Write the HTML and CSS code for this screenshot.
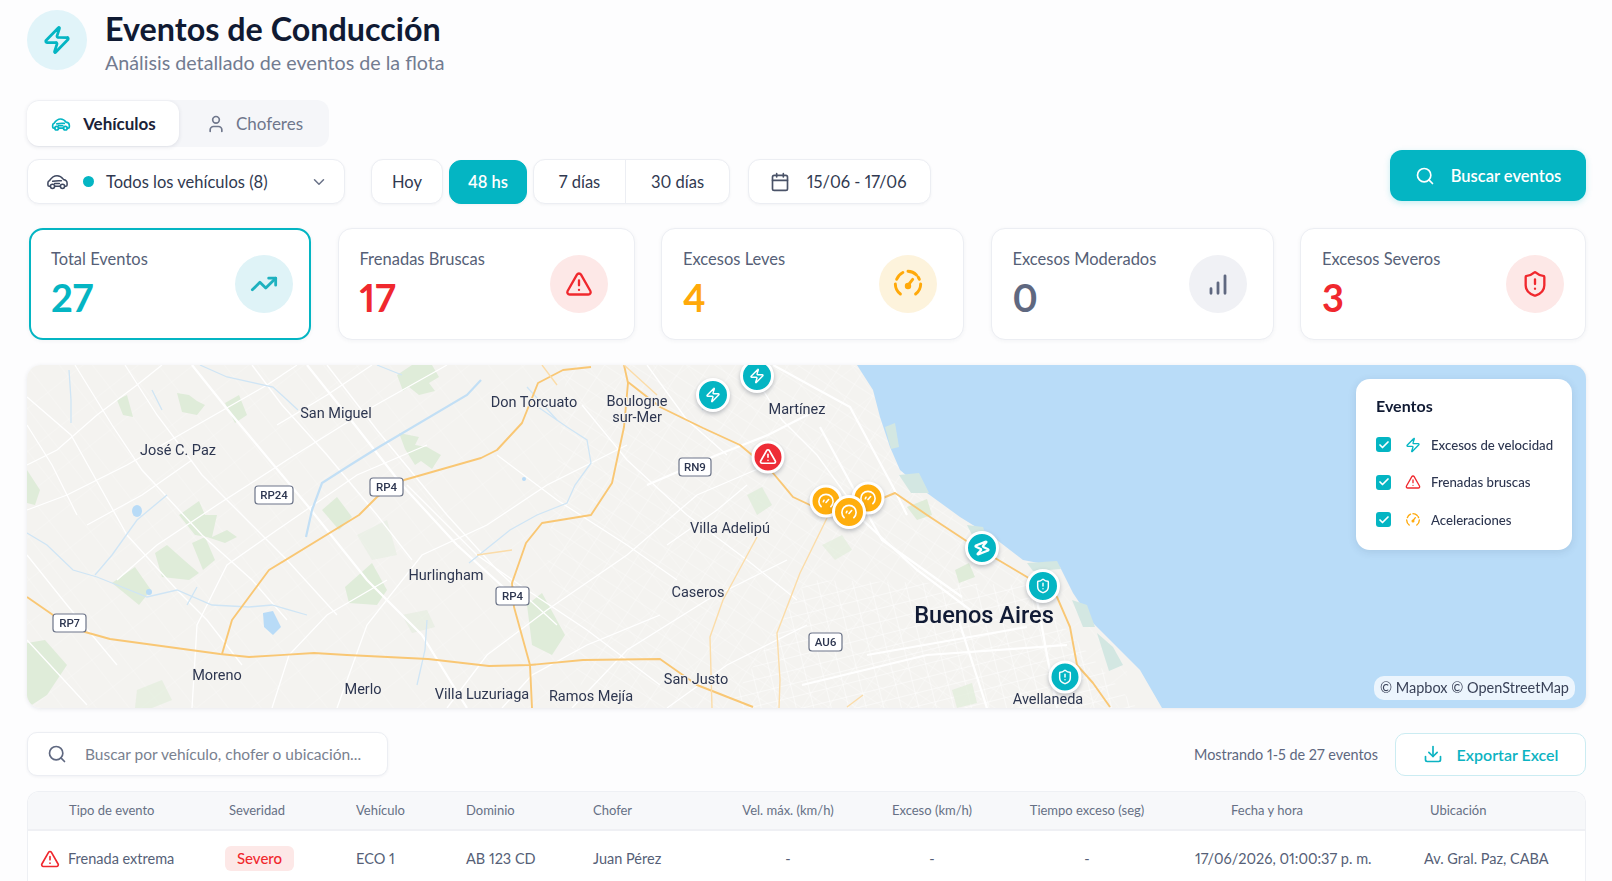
FILE: index.html
```html
<!DOCTYPE html>
<html lang="es">
<head>
<meta charset="utf-8">
<title>Eventos de Conducción</title>
<link rel="stylesheet" href="styles.css">
</head>
<body>
<svg class="sprite" xmlns="http://www.w3.org/2000/svg">
  <symbol id="i-zap" viewBox="0 0 24 24"><path d="M4 14a1 1 0 0 1-.78-1.63l9.9-10.2a.5.5 0 0 1 .86.46l-1.92 6.02A1 1 0 0 0 13 10h7a1 1 0 0 1 .78 1.63l-9.9 10.2a.5.5 0 0 1-.86-.46l1.92-6.02A1 1 0 0 0 11 14z"/></symbol>
  <symbol id="i-car" viewBox="0 0 24 24"><path d="M4.6 17H3.4C2.6 17 2 16.4 2 15.6v-2.2c0-1.1.7-2 1.7-2.4C5.600 8.200 8 6 11.500 6c3 0 5.200 1.800 6.700 3.800 2.200.4 3.800 1.600 3.800 3.800v2c0 .8-.6 1.400-1.400 1.400h-1.100"/><path d="M9 17h6"/><circle cx="6.800" cy="17" r="2.200"/><circle cx="17.200" cy="17" r="2.200"/><path d="M7 11.800c2.500-.6 5.500-.8 9-.6M9 14h5"/></symbol>
  <symbol id="i-user" viewBox="0 0 24 24"><path d="M19 21v-2a4 4 0 0 0-4-4H9a4 4 0 0 0-4 4v2"/><circle cx="12" cy="7" r="4"/></symbol>
  <symbol id="i-chev" viewBox="0 0 24 24"><path d="m6 9 6 6 6-6"/></symbol>
  <symbol id="i-cal" viewBox="0 0 24 24"><path d="M8 2v4M16 2v4"/><rect x="3" y="4" width="18" height="18" rx="2"/><path d="M3 10h18"/></symbol>
  <symbol id="i-search" viewBox="0 0 24 24"><circle cx="11" cy="11" r="8"/><path d="m21 21-4.300-4.300"/></symbol>
  <symbol id="i-trend" viewBox="0 0 24 24"><path d="m22 7-8.500 8.500-5-5L2 17"/><path d="M16 7h6v6"/></symbol>
  <symbol id="i-alert" viewBox="0 0 24 24"><path d="m21.730 18-8-14a2 2 0 0 0-3.480 0l-8 14A2 2 0 0 0 4 21h16a2 2 0 0 0 1.730-3"/><path d="M12 9v4M12 17h.01"/></symbol>
  <symbol id="i-gauge" viewBox="0 0 24 24"><path d="M6.300 19.500a9.500 9.500 0 0 1-3.800-7.500M21.500 12a9.500 9.500 0 0 1-3.800 7.500"/><path d="M3.500 8.500A9.500 9.500 0 0 1 9 3M12 2.500a9.500 9.500 0 0 1 8.500 6" stroke-dasharray="7 2"/><path d="m12 13 3.500-4.500"/><circle cx="12" cy="13.500" r="1.300"/></symbol>
  <symbol id="i-dial" viewBox="0 0 24 24"><path d="M5.500 19.500a9.500 9.500 0 1 1 13 0"/><path d="m12 14 3.500-4"/><path d="M8.500 13a4 4 0 0 1 .8-2"/></symbol>
  <symbol id="i-bars" viewBox="0 0 24 24"><path d="M6 20v-4M12 20v-9M18 20V5"/></symbol>
  <symbol id="i-shield" viewBox="0 0 24 24"><path d="M20 13c0 5-3.500 7.500-7.660 8.950a1 1 0 0 1-.67-.01C7.500 20.500 4 18 4 13V6a1 1 0 0 1 1-1c2 0 4.500-1.200 6.240-2.720a1.170 1.170 0 0 1 1.520 0C14.510 3.810 17 5 19 5a1 1 0 0 1 1 1z"/><path d="M12 8v4M12 16h.01"/></symbol>
  <symbol id="i-down" viewBox="0 0 24 24"><path d="M12 15V3"/><path d="M21 15v4a2 2 0 0 1-2 2H5a2 2 0 0 1-2-2v-4"/><path d="m7 10 5 5 5-5"/></symbol>
  <symbol id="i-check" viewBox="0 0 24 24"><path d="M20 6 9 17l-5-5"/></symbol>
</svg>

<main class="page">
  <header class="head">
    <div class="head-ico"><svg class="ic"><use href="#i-zap"/></svg></div>
    <div class="head-txt">
      <h1 class="title">Eventos de Conducción</h1>
      <p class="sub">Análisis detallado de eventos de la flota</p>
    </div>
  </header>

  <section class="controls">
    <div class="controls-left">
      <div class="tabs">
        <button class="tab tab-on"><svg class="ic ic-20 teal"><use href="#i-car"/></svg>Vehículos</button>
        <button class="tab"><svg class="ic ic-20"><use href="#i-user"/></svg>Choferes</button>
      </div>
      <div class="filters">
        <div class="select">
          <svg class="ic ic-23 slate-dark"><use href="#i-car"/></svg>
          <span class="dot"></span>
          <span class="select-txt">Todos los vehículos (8)</span>
          <svg class="ic ic-18 chev"><use href="#i-chev"/></svg>
        </div>
        <button class="pill pill-hoy">Hoy</button>
        <button class="pill pill-on">48 hs</button>
        <div class="group">
          <button class="seg seg-7">7 días</button>
          <button class="seg seg-30">30 días</button>
        </div>
        <div class="date"><svg class="ic ic-20"><use href="#i-cal"/></svg>15/06 - 17/06</div>
      </div>
    </div>
    <button class="cta"><svg class="ic ic-20"><use href="#i-search"/></svg>Buscar eventos</button>
  </section>

  <section class="cards">
    <article class="card card-on">
      <div><div class="card-l">Total Eventos</div><div class="card-n teal">27</div></div>
      <div class="round round-teal"><svg class="ic ic-28 ic-thick"><use href="#i-trend"/></svg></div>
    </article>
    <article class="card">
      <div><div class="card-l">Frenadas Bruscas</div><div class="card-n red">17</div></div>
      <div class="round round-red"><svg class="ic ic-28"><use href="#i-alert"/></svg></div>
    </article>
    <article class="card">
      <div><div class="card-l">Excesos Leves</div><div class="card-n orange">4</div></div>
      <div class="round round-orange"><svg class="ic ic-32"><use href="#i-gauge"/></svg></div>
    </article>
    <article class="card">
      <div><div class="card-l">Excesos Moderados</div><div class="card-n slate">0</div></div>
      <div class="round round-gray"><svg class="ic ic-28 ic-thick"><use href="#i-bars"/></svg></div>
    </article>
    <article class="card card-last">
      <div><div class="card-l">Excesos Severos</div><div class="card-n red">3</div></div>
      <div class="round round-red"><svg class="ic ic-28"><use href="#i-shield"/></svg></div>
    </article>
  </section>

  <section class="map">
    <svg class="map-svg" viewBox="0 0 1559 343" width="1559" height="343" xmlns="http://www.w3.org/2000/svg">
      <defs>
        <pattern id="urban" width="17" height="13" patternUnits="userSpaceOnUse" patternTransform="rotate(-14)">
          <path d="M0 0H17M0 0V13" stroke="#ffffff" stroke-width="1" fill="none"/>
        </pattern>
        <pattern id="urban2" width="22" height="15" patternUnits="userSpaceOnUse" patternTransform="rotate(33)">
          <path d="M0 0H22M0 0V15" stroke="#ffffff" stroke-width=".8" fill="none"/>
        </pattern>
        <pattern id="fine" width="34" height="26" patternUnits="userSpaceOnUse" patternTransform="rotate(52)">
          <path d="M0 0H34M0 0V26" stroke="#ffffff" stroke-width=".6" fill="none" opacity=".6"/>
        </pattern>
      </defs>
      <rect class="land" width="1559" height="343"/>
      <rect class="t-fine" width="1100" height="343"/>
      <path class="t-urban2" d="M540 0H830L900 130L1000 210L1090 343H560L520 200Z"/>
      <path class="t-urban" d="M780 215L1000 220L1110 343H700Z"/>

      <g class="green">
        <path d="M370 10L385 0H405L412 12L402 18L408 26L392 30L382 22L376 26Z"/>
        <path d="M372 68L392 72L388 80L400 82L414 90L405 104L394 96L388 100L378 84Z"/>
        <path d="M150 28L162 30L170 36L178 40L170 50L155 47Z"/>
        <path d="M198 38L212 30L220 50L208 58Z"/>
        <path d="M90 35L100 30L106 52L96 50Z"/>
        <path d="M152 150L172 136L178 150L190 150L185 172L200 165L210 172L198 178L180 172L168 170Z"/>
        <path d="M128 188L140 180L158 196L172 208L162 215L135 212Z"/>
        <path d="M165 178L178 172L188 195L176 205Z"/>
        <path d="M85 218L108 202L124 225L112 240Z"/>
        <path d="M318 222L345 198L360 225L350 240L322 238Z"/>
        <path d="M330 170L360 155L370 190L345 195Z" opacity=".4"/>
        <path d="M500 240L515 228L538 270L525 290L505 280Z"/>
        <path d="M0 105L13 125L8 140L0 138Z"/>
        <path d="M0 278L18 275L40 300L20 330L0 343Z"/>
        <path d="M295 145L310 132L325 152L312 165Z"/>
        <path d="M110 325L135 315L145 335L125 343H108Z" opacity=".6"/>
        <path d="M375 250L400 245L408 262L385 268Z" opacity=".5"/>
        <path d="M720 130L735 122L745 140L730 150Z" opacity=".8"/>
        <path d="M795 180L815 170L825 185L808 195Z" opacity=".6"/>
        <path d="M928 205L942 198L948 212L932 218Z"/>
        <path d="M880 142L900 134L905 150L890 155Z"/>
        <path d="M925 325L945 318L950 338L930 343Z" opacity=".7"/>
      </g>

      <g class="minor">
        <path d="M0 32L44 70L72 120L100 170L150 225L180 255L215 300"/>
        <path d="M48 0L85 60L115 105L175 170L225 215L260 255"/>
        <path d="M98 0L130 50L175 110L230 165L260 195L310 250"/>
        <path d="M0 100L30 85L70 50L110 20L135 0"/>
        <path d="M0 145L40 130L100 100L170 60L240 20L270 0"/>
        <path d="M90 215L130 180L190 140L260 95L340 45L420 0"/>
        <path d="M165 343L170 260L200 200L250 165L330 110L400 80"/>
        <path d="M0 275L60 340M0 190L40 240L90 300"/>
        <path d="M310 343L340 260L395 190L460 160L520 120L600 80"/>
        <path d="M420 343L460 290L520 245L600 190L670 130L740 100"/>
        <path d="M545 343L600 285L680 235L760 195"/>
        <path d="M380 120L450 190L500 225L560 265L633 320"/>
        <path d="M300 0L350 65L420 150L470 205L530 260"/>
        <path d="M555 40L600 95L660 150L720 195L770 235"/>
        <path d="M470 90L530 135L600 180L650 215"/>
        <path d="M620 0L660 55L700 90"/>
        <path d="M720 0L755 55L790 90L830 145"/>
        <path d="M225 0L255 40L300 90L350 150L385 195"/>
        <path d="M250 60L300 30L345 0"/>
        <path d="M60 160L115 130L165 95"/>
        <path d="M0 60L25 100L50 150"/>
        <path d="M245 343L262 290L300 250L360 215"/>
        <path d="M475 343L505 310L560 280L633 250"/>
        <path d="M640 180L690 145L720 120"/>
        <path d="M640 343L700 300L780 260"/>
      </g>
      <g class="major">
        <path d="M165 0L205 50L280 140L340 215L395 270L440 343"/>
        <path d="M280 0L320 50L375 120L430 180L485 230"/>
        <path d="M746 0L823 42L866 122L880 150"/>
        <path d="M793 62L830 130L855 175L935 232"/>
        <path d="M830 150L890 205L950 250"/>
        <path d="M620 120L690 90L741 70L800 40"/>
        <path d="M1010 235L1020 290L1030 343M930 250L960 343M840 290L1000 262"/>
        <path d="M775 320L900 290L1040 280"/>
      </g>

      <g class="river">
        <path d="M454 15L440 30L352 82L320 102L295 118L285 145L279 172"/>
        <path d="M173 0L200 12L246 22L271 45"/>
        <path d="M42 5L44 35L44 58"/>
        <path d="M0 168L20 180L46 205L70 212L95 222L120 232L150 225L185 240L222 242L245 240L280 250"/>
        <path d="M511 42L540 62L560 75L564 98L548 120L540 138L510 150L483 165L442 198"/>
        <path d="M140 130L110 155L85 190L68 210"/>
        <path d="M400 255L398 285L390 320"/>
        <path d="M350 0L375 10M500 22L530 55"/>
        <path d="M125 25L135 45M170 222L160 240"/>
        <path d="M675 45L690 30"/>
      </g>
      <ellipse class="lake" cx="110" cy="146" rx="5" ry="6"/>
      <path class="lake" d="M236 248L246 246L254 262L246 270L237 262Z"/>
      <ellipse class="lake" cx="122" cy="227" rx="3" ry="3"/>
      <ellipse class="lake" cx="497" cy="114" rx="2" ry="2"/>

      <g class="hwy">
        <path d="M0 232L26 250L58 267L83 274L193 289L222 292L287 288L320 290L401 294L462 301L503 300L556 295L633 294L670 320L726 342"/>
        <path d="M195 289L205 255L242 205L332 150L350 132L377 115L454 93L470 85L495 58L503 38L511 18L536 5L564 2"/>
        <path d="M505 343L503 300L487 242L485 218L499 178L515 158L564 150L585 118L597 62L601 18L597 0"/>
        <path d="M601 17L633 42L676 63L713 80L725 90L746 108L766 132L783 140L856 133L868 128L900 150L941 177L1000 212L1030 232L1043 262L1050 300L1066 318L1083 342"/>
      </g>
      <g class="hwy-soft">
        <path d="M800 153L773 208L750 268L753 315L752 343"/>
        <path d="M730 172L696 235L683 272L685 343"/>
        <path d="M820 342L836 330M450 190L485 185M515 0L530 20M597 0L630 30"/>
      </g>

      <path class="sea" d="M830 0L846 25L853 52L863 82L873 105L900 128L933 152L970 175L996 195L1033 202L1046 228L1066 258L1093 285L1113 305L1135 343H1559V0Z"/>
      <g class="port">
        <path d="M858 62L868 58L872 82L864 84Z"/>
        <path d="M872 110L892 108L902 128L884 128Z"/>
        <path d="M940 160L956 162L962 178L946 172Z"/>
        <path d="M1045 235L1060 240L1068 262L1056 262Z"/>
        <path d="M1070 268L1086 282L1096 300L1082 306Z"/>
        <path d="M1000 198L1030 196L1034 204L1006 206Z"/>
      </g>

      <g class="lbl">
        <text x="309" y="53">San Miguel</text>
        <text x="151" y="90">José C. Paz</text>
        <text x="507" y="42">Don Torcuato</text>
        <text x="610" y="41">Boulogne</text>
        <text x="610" y="57">sur-Mer</text>
        <text x="770" y="49">Martínez</text>
        <text x="703" y="168">Villa Adelipú</text>
        <text x="419" y="215">Hurlingham</text>
        <text x="671" y="232">Caseros</text>
        <text x="190" y="315">Moreno</text>
        <text x="336" y="329">Merlo</text>
        <text x="455" y="334">Villa Luzuriaga</text>
        <text x="564" y="336">Ramos Mejía</text>
        <text x="669" y="319">San Justo</text>
        <text x="1021" y="339">Avellaneda</text>
        <text class="lbl-big" x="957" y="258">Buenos Aires</text>
      </g>

      <g class="sign">
        <rect x="652" y="93" width="32" height="18" rx="3"/><text x="668" y="106">RN9</text>
        <rect x="228" y="121" width="38" height="18" rx="3"/><text x="247" y="134">RP24</text>
        <rect x="343" y="113" width="33" height="18" rx="3"/><text x="359.500" y="126">RP4</text>
        <rect x="469" y="222" width="33" height="18" rx="3"/><text x="485.500" y="235">RP4</text>
        <rect x="26" y="249" width="33" height="18" rx="3"/><text x="42.500" y="262">RP7</text>
        <rect x="782" y="268" width="33" height="18" rx="3"/><text x="798.500" y="281">AU6</text>
      </g>

      <g class="pin pin-t" transform="translate(686 30)"><circle r="15.500"/><use href="#i-zap" x="-8" y="-8" width="16" height="16"/></g>
      <g class="pin pin-t" transform="translate(730 11)"><circle r="15.500"/><use href="#i-zap" x="-8" y="-8" width="16" height="16"/></g>
      <g class="pin pin-r" transform="translate(741 92)"><circle r="15"/><use href="#i-alert" x="-9" y="-9.500" width="18" height="18"/></g>
      <g class="pin pin-o" transform="translate(799 136)"><circle r="15"/><use href="#i-dial" x="-9" y="-9" width="18" height="18"/></g>
      <g class="pin pin-o" transform="translate(841 133)"><circle r="15"/><use href="#i-dial" x="-9" y="-9" width="18" height="18"/></g>
      <g class="pin pin-o" transform="translate(822 147)"><circle r="15.500"/><use href="#i-dial" x="-9" y="-9" width="18" height="18"/></g>
      <g class="pin pin-t pin-blob" transform="translate(955 183)"><circle r="15.500"/><use href="#i-zap" x="-9" y="-9" width="18" height="18" transform="rotate(25)"/></g>
      <g class="pin pin-t" transform="translate(1016 221)"><circle r="15.500"/><use href="#i-shield" x="-8" y="-8" width="16" height="16"/></g>
      <g class="pin pin-t" transform="translate(1038 312)"><circle r="15"/><use href="#i-shield" x="-8" y="-8" width="16" height="16"/></g>
    </svg>

    <aside class="legend">
      <h2 class="legend-t">Eventos</h2>
      <div class="legend-r"><span class="chk"><svg class="ic ic-12"><use href="#i-check"/></svg></span><svg class="ic ic-16 teal"><use href="#i-zap"/></svg>Excesos de velocidad</div>
      <div class="legend-r"><span class="chk"><svg class="ic ic-12"><use href="#i-check"/></svg></span><svg class="ic ic-16 red"><use href="#i-alert"/></svg>Frenadas bruscas</div>
      <div class="legend-r"><span class="chk"><svg class="ic ic-12"><use href="#i-check"/></svg></span><svg class="ic ic-16 orange"><use href="#i-gauge"/></svg>Aceleraciones</div>
    </aside>
    <div class="attrib">© Mapbox © OpenStreetMap</div>
  </section>

  <section class="bar">
    <div class="find"><svg class="ic ic-20"><use href="#i-search"/></svg>Buscar por vehículo, chofer o ubicación...</div>
    <div class="bar-r">
      <span class="count">Mostrando 1-5 de 27 eventos</span>
      <button class="export"><svg class="ic ic-20"><use href="#i-down"/></svg>Exportar Excel</button>
    </div>
  </section>

  <section class="table">
    <div class="tr th">
      <div class="c1">Tipo de evento</div>
      <div class="c2">Severidad</div>
      <div>Vehículo</div>
      <div>Dominio</div>
      <div>Chofer</div>
      <div class="mid">Vel. máx. (km/h)</div>
      <div class="mid">Exceso (km/h)</div>
      <div class="mid">Tiempo exceso (seg)</div>
      <div class="h-date">Fecha y hora</div>
      <div class="h-loc">Ubicación</div>
    </div>
    <div class="tr td">
      <div class="c1 kind"><svg class="ic ic-20 red"><use href="#i-alert"/></svg>Frenada extrema</div>
      <div><span class="badge">Severo</span></div>
      <div>ECO 1</div>
      <div>AB 123 CD</div>
      <div>Juan Pérez</div>
      <div class="mid">-</div>
      <div class="mid">-</div>
      <div class="mid">-</div>
      <div class="v-date">17/06/2026, 01:00:37 p. m.</div>
      <div class="v-loc">Av. Gral. Paz, CABA</div>
    </div>
  </section>
</main>
</body>
</html>
```
FILE: styles.css
```css
* { box-sizing: border-box; }
html, body { margin: 0; height: 100%; overflow: hidden; }
body { background: #fdfdfe; font-family: "Lato", "Liberation Sans", sans-serif; color: #2d3650; font-variant-numeric: proportional-nums; }
button { font: inherit; color: inherit; background: none; border: 0; padding: 0; }
h1, h2, p { margin: 0; }
.sprite { display: none; }

.ic { display: block; flex: none; width: 28px; height: 28px; fill: none; stroke: currentColor; stroke-width: 2; stroke-linecap: round; stroke-linejoin: round; }
.ic-12 { width: 12px; height: 12px; stroke-width: 3.5; }
.ic-16 { width: 16px; height: 16px; }
.ic-18 { width: 18px; height: 18px; }
.ic-20 { width: 20px; height: 20px; }
.ic-23 { width: 23px; height: 23px; stroke-width: 1.6; }
.ic-24 { width: 24px; height: 24px; }
.ic-28 { width: 28px; height: 28px; }
.ic-32 { width: 32px; height: 32px; stroke-width: 2.2; }
.ic-thick { stroke-width: 2.4; }
.teal { color: #04b5c3; }
.red { color: #f0282e; }
.orange { color: #ffa90a; }
.slate { color: #5f6880; }
.slate-dark { color: #3f4860; }

.page { padding: 10px 26px 0 27px; }

.head { display: flex; align-items: center; gap: 18px; height: 60px; }
.head-ico { width: 60px; height: 60px; border-radius: 50%; background: #e1f4f9; color: #04b5c3; display: flex; align-items: center; justify-content: center; }
.head-ico .ic { width: 30px; height: 30px; stroke-width: 2.2; }
.head-txt { padding-top: 4px; }
.title { font-size: 32.300px; line-height: 40px; font-weight: 700; color: #101a33; }
.sub { font-size: 19.700px; line-height: 26px; color: #727b90; margin-top: 1px; }

.controls { display: flex; justify-content: space-between; align-items: flex-start; margin-top: 30px; }
.controls-left { display: flex; flex-direction: column; gap: 12px; }

.tabs { display: flex; width: 302px; height: 47px; padding: 1px 0; border-radius: 12px; background: #f5f6f9; }
.tab { display: flex; align-items: center; justify-content: center; gap: 12px; height: 45px; font-size: 17px; color: #6f778c; padding-left: 1px; }
.tab:last-child { width: 150px; gap: 10px; }
.tab-on { width: 152px; background: #fff; border-radius: 12px; font-weight: 700; color: #1a2238; box-shadow: 0 1px 4px rgba(40, 50, 80, .12); }

.filters { display: flex; align-items: center; height: 45px; }
.select, .pill, .group, .date { height: 45px; background: #fff; border: 1.5px solid #eceef3; border-radius: 12px; box-shadow: 0 1px 3px rgba(40, 50, 80, .05); font-size: 16.500px; color: #303950; }
.select { width: 318px; display: flex; align-items: center; padding: 0 16px 0 18px; margin-right: 26px; }
.dot { width: 11px; height: 11px; border-radius: 50%; background: #04b5c3; margin-left: 14px; flex: none; }
.select-txt { margin-left: 12px; flex: 1; }
.chev { color: #6a7288; }
.pill-hoy { width: 72px; margin-right: 6px; }
.pill-on { width: 78px; height: 44px; margin-right: 6px; background: #04b5c3; border-color: #04b5c3; color: #fff; font-weight: 600; }
.group { display: flex; width: 197px; margin-right: 18px; }
.seg-7 { width: 92px; border-right: 1px solid #eceef3; }
.seg-30 { flex: 1; }
.date { width: 183px; display: flex; align-items: center; gap: 17px; padding-left: 21px; font-size: 16.500px; }
.date .ic { color: #4a5368; }

.cta { display: flex; align-items: center; justify-content: center; gap: 16px; width: 196px; height: 51px; margin-top: 50px; border-radius: 12px; background: #04b5c3; color: #fff; font-size: 16.500px; font-weight: 600; box-shadow: 0 2px 6px rgba(4, 181, 195, .22); }

.cards { display: grid; grid-template-columns: 282px 297px 303px 283px 286px; justify-content: space-between; margin-top: 24px; height: 112px; padding-left: 2px; }
.card { display: flex; justify-content: space-between; align-items: center; padding: 0 26px 0 21px; background: #fff; border: 1.5px solid #eceef3; border-radius: 14px; box-shadow: 0 1px 4px rgba(40, 50, 80, .05); }
.card-on { border: 2px solid #04b5c3; padding-right: 16px; padding-left: 20px; }
.card-last { padding-right: 21px; }
.card-l { font-size: 16.500px; line-height: 20px; color: #565f77; margin-bottom: 5px; margin-top: 1px; }
.card-n { font-size: 38px; line-height: 46px; font-weight: 700; }
.round { width: 58px; height: 58px; border-radius: 50%; display: flex; align-items: center; justify-content: center; }
.round-teal { background: #dff3f7; color: #1eb1bf; }
.round-red { background: #fde8e7; color: #f0282e; }
.round-orange { background: #fdf3dc; color: #ffa90a; }
.round-gray { background: #f0f1f5; color: #5f6880; }

.map { position: relative; margin-top: 25px; height: 343px; border-radius: 14px; overflow: hidden; box-shadow: 0 1px 4px rgba(40, 50, 80, .1); }
.map-svg { display: block; }
.land { fill: #f4f3f0; }
.t-fine { fill: url(#fine); }
.t-urban { fill: url(#urban); }
.t-urban2 { fill: url(#urban2); opacity: .75; }
.green { filter: blur(.7px); }
.green path { fill: #dfecd9; }
.minor { filter: blur(.3px); }
.minor path { fill: none; stroke: #fff; stroke-width: 1.3; }
.major path { fill: none; stroke: #fff; stroke-width: 2.2; }
.river { filter: blur(.3px); }
.river path { fill: none; stroke: #cfe5f5; stroke-width: 1.3; }
.river path:first-child { stroke-width: 2.2; stroke: #c2dff5; }
.lake { fill: #b8dbf7; }
.hwy { filter: blur(.25px); }
.hwy path { fill: none; stroke: #f9c774; stroke-width: 1.9; stroke-linejoin: round; }
.hwy-soft path { fill: none; stroke: #fbdca8; stroke-width: 1.4; stroke-linejoin: round; }
.sea { fill: #b9dcf8; }
.port { filter: blur(.6px); }
.port path { fill: #d3e7e2; }
.lbl text { font-family: "Roboto", "Liberation Sans", sans-serif; font-size: 14.5px; fill: #2d3650; text-anchor: middle; stroke: #f4f3f0; stroke-width: 2px; paint-order: stroke; }
.lbl .lbl-big { font-size: 23.6px; font-weight: 500; fill: #111b35; }
.sign rect { fill: #fff; stroke: #6d7589; stroke-width: 1.2; }
.sign text { font-family: "Roboto", "Liberation Sans", sans-serif; font-size: 11.5px; font-weight: 500; fill: #2d3650; text-anchor: middle; }
.pin { filter: drop-shadow(0 2px 2px rgba(30, 40, 60, .28)); }
.pin circle { stroke: #fff; stroke-width: 3; }
.pin use { fill: none; stroke: #fff; stroke-width: 2.2; stroke-linecap: round; stroke-linejoin: round; }
.pin-blob use { stroke-width: 3; }
.pin-t circle { fill: #04b5c3; }
.pin-r circle { fill: #ee2c36; }
.pin-o circle { fill: #ffae0d; }

.legend { position: absolute; top: 14px; right: 14px; width: 216px; height: 171px; padding: 17px 20px; background: #fff; border-radius: 14px; box-shadow: 0 2px 8px rgba(30, 60, 90, .12); }
.legend-t { font-size: 16px; line-height: 20px; font-weight: 700; color: #101a33; margin-bottom: 10px; }
.legend-r { display: flex; align-items: center; height: 37.5px; font-size: 13.2px; font-weight: 500; color: #2d3650; white-space: nowrap; }
.legend-r .ic-16 { margin: 0 10px 0 14px; }
.chk { width: 15px; height: 15px; border-radius: 3px; background: #04b5c3; color: #fff; display: flex; align-items: center; justify-content: center; flex: none; }
.attrib { position: absolute; right: 11px; bottom: 8px; height: 24px; padding: 0 6px; line-height: 24px; border-radius: 10px; background: rgba(255, 255, 255, .72); font-size: 14.5px; color: #3a4258; }

.bar { display: flex; justify-content: space-between; align-items: center; margin-top: 24px; height: 44px; }
.find { width: 361px; height: 44px; display: flex; align-items: center; gap: 18px; padding-left: 19px; background: #fff; border: 1.5px solid #eceef3; border-radius: 10px; box-shadow: 0 1px 3px rgba(40, 50, 80, .06); font-size: 15.500px; color: #79818f; }
.find .ic { color: #5f6880; }
.bar-r { display: flex; align-items: center; gap: 17px; }
.count { font-size: 14.400px; color: #5f6880; }
.export { display: flex; align-items: center; justify-content: center; gap: 14px; width: 191px; height: 43px; border: 1.5px solid #cbecf2; border-radius: 10px; background: #fff; color: #0cb3c2; font-size: 16px; font-weight: 600; }

.table { margin-top: 15px; border: 1px solid #eef0f4; border-bottom: 0; border-radius: 12px 12px 0 0; overflow: hidden; background: #fff; }
.tr { display: grid; grid-template-columns: 197px 131px 110px 127px 115px 160px 128px 182px 199px 209px; align-items: center; }
.th { height: 39px; background: #f7f8fa; border-bottom: 2px solid #eff0f4; font-size: 13px; color: #667085; padding-bottom: 1px; }
.td { height: 55px; font-size: 14.500px; color: #565f77; }
.c1 { padding-left: 41px; }
.c2 { padding-left: 4px; }
.mid { text-align: center; }
.h-date { padding-left: 53px; }
.h-loc { padding-left: 53px; }
.v-date { padding-left: 17px; white-space: nowrap; }
.v-loc { padding-left: 47px; white-space: nowrap; }
.kind { display: flex; align-items: center; gap: 8px; padding-left: 12px; }
.badge { display: inline-block; width: 69px; height: 25px; line-height: 25px; text-align: center; border-radius: 6px; background: #fde8e7; color: #f0282e; font-size: 15px; font-weight: 500; }
```
